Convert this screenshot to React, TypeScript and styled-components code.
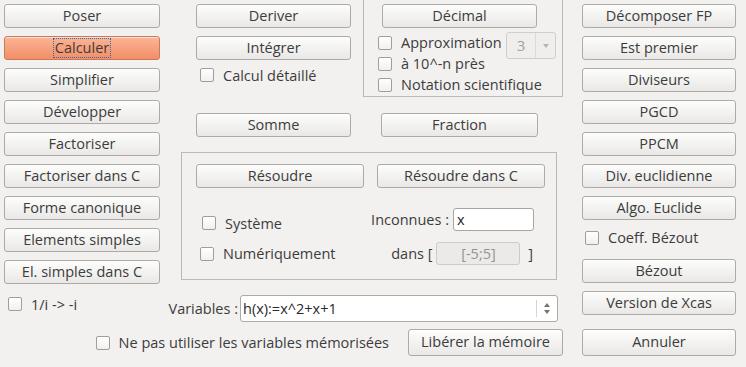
import React from 'react';
import styled, { createGlobalStyle } from 'styled-components';

const TEXT = '#3c3c3c';
const BORDER = '#aeaba7';
const FRAME = '#bcb9b5';

const GlobalStyle = createGlobalStyle`
  html, body {
    margin: 0;
    padding: 0;
    background: #f2f1f0;
  }
  body {
    font-family: 'Open Sans', 'Noto Sans', sans-serif;
    font-size: 14.5px;
    color: ${TEXT};
  }
  * {
    box-sizing: border-box;
  }
`;

const Window = styled.div`
  width: 746px;
  height: 367px;
  overflow: hidden;
  display: grid;
  grid-template-columns: 156px 422px 154px;
  grid-template-rows: 322px 27px;
  row-gap: 7px;
  padding-left: 4px;
`;

const Column = styled.div`
  display: flex;
  flex-direction: column;
  gap: 8px;
  padding-top: 4px;
`;

const Button = styled.button<{ $w?: number; $h?: number; $active?: boolean; $top?: number }>`
  width: ${(p) => p.$w ?? 156}px;
  height: ${(p) => p.$h ?? 24}px;
  margin-top: ${(p) => p.$top ?? 0}px;
  flex-shrink: 0;
  padding: 0;
  border-radius: 3px;
  border: 1px solid ${(p) => (p.$active ? '#c77a5b' : BORDER)};
  background: ${(p) =>
    p.$active
      ? 'linear-gradient(#fbb596, #f38d67)'
      : 'linear-gradient(#fdfdfc, #e9e8e6)'};
  box-shadow: inset 0 1px 0 rgba(255, 255, 255, 0.6);
  font-family: inherit;
  font-size: 14.5px;
  line-height: 1;
  color: ${TEXT};
  display: flex;
  align-items: center;
  justify-content: center;
`;

const Focus = styled.span`
  outline: 1px dotted #2d6aa6;
  outline-offset: 1px;
  padding: 1px 0;
`;

const CheckRow = styled.label<{ $left?: number; $h?: number; $top?: number }>`
  display: flex;
  align-items: center;
  gap: 9px;
  height: ${(p) => p.$h ?? 14}px;
  margin-top: ${(p) => p.$top ?? 0}px;
  padding-left: ${(p) => p.$left ?? 0}px;
  white-space: nowrap;
`;

const Box = styled.span`
  width: 14px;
  height: 14px;
  flex-shrink: 0;
  border: 1px solid #a19e9a;
  border-radius: 2px;
  background: linear-gradient(#ffffff, #f1f0ef);
`;

const Check: React.FC<{ label: string; left?: number; h?: number; top?: number }> = ({
  label,
  left,
  h,
  top,
}) => (
  <CheckRow $left={left} $h={h} $top={top}>
    <Box />
    <span>{label}</span>
  </CheckRow>
);

const Middle = styled.div`
  padding-left: 10px;
  display: flex;
  flex-direction: column;
`;

const TopRow = styled.div`
  display: flex;
  height: 97px;
`;

const SubStack = styled.div`
  display: flex;
  flex-direction: column;
  gap: 8px;
  padding: 4px 0 0 26px;
`;

const DecimalBox = styled.div`
  margin-left: 12px;
  width: 200px;
  height: 97px;
  border: 1px solid ${FRAME};
  border-top: none;
  padding: 4px 6px 0 14px;
  display: grid;
  grid-template-columns: minmax(0, 1fr) 50px;
  grid-template-rows: 28px 21px 21px 21px;
  align-items: center;

  & > button {
    grid-column: 1 / -1;
    margin-left: 4px;
    align-self: start;
  }
`;

const Spin = styled.div`
  grid-column: 2;
  grid-row: 2 / span 2;
  align-self: start;
  height: 27px;
  width: 50px;
  border: 1px solid #d0cecb;
  border-radius: 3px;
  background: #efeeed;
  color: #a3a19e;
  display: flex;
  align-items: center;
`;

const SpinValue = styled.span`
  flex: 1;
  padding-left: 10px;
`;

const SpinArrow = styled.span`
  width: 20px;
  height: 100%;
  border-left: 1px solid #dcdad7;
  display: flex;
  align-items: center;
  justify-content: center;
`;

const TriangleDown = styled.span<{ $color?: string }>`
  width: 0;
  height: 0;
  border-left: 3.5px solid transparent;
  border-right: 3.5px solid transparent;
  border-top: 4px solid ${(p) => p.$color ?? '#b7b5b2'};
`;

const TriangleUp = styled(TriangleDown)`
  border-top: none;
  border-bottom: 4px solid ${(p) => p.$color ?? '#b7b5b2'};
`;

const ButtonRow = styled.div<{ $top?: number; $left?: number; $gap?: number }>`
  display: flex;
  gap: ${(p) => p.$gap ?? 30}px;
  margin-top: ${(p) => p.$top ?? 0}px;
  padding-left: ${(p) => p.$left ?? 0}px;
`;

const SolveBox = styled.div`
  margin: 15px 0 0 11px;
  width: 376px;
  height: 128px;
  border: 1px solid ${FRAME};
  padding: 11px 0 0 14px;
`;

const SolveGrid = styled.div`
  display: grid;
  grid-template-columns: 168px 168px;
  grid-auto-rows: 23px;
  column-gap: 13px;
  row-gap: 11px;
  margin-top: 20px;

  & > label:first-child {
    align-self: end;
    margin-bottom: 1px;
  }
  & > label {
    align-self: center;
  }
`;

const FieldRow = styled.div<{ $right: number }>`
  display: flex;
  align-items: center;
  justify-content: flex-end;
  gap: 4px;
  padding-right: ${(p) => p.$right}px;
  white-space: nowrap;
`;

const TextInput = styled.div<{ $w: number; $disabled?: boolean }>`
  width: ${(p) => p.$w}px;
  flex-shrink: 0;
  height: 23px;
  border-radius: 3px;
  border: 1px solid ${(p) => (p.$disabled ? '#cdcbc8' : '#a9a6a2')};
  background: ${(p) => (p.$disabled ? '#ebeae8' : '#ffffff')};
  color: ${(p) => (p.$disabled ? '#94928f' : '#222')};
  display: flex;
  align-items: center;
  justify-content: ${(p) => (p.$disabled ? 'center' : 'flex-start')};
  padding-left: ${(p) => (p.$disabled ? 0 : 3)}px;
`;

const VarRow = styled.div`
  margin-top: 15px;
  width: 388px;
  height: 27px;
  display: flex;
  align-items: center;
  justify-content: flex-end;
  gap: 2px;
  white-space: nowrap;
`;

const Combo = styled.div`
  width: 318px;
  flex-shrink: 0;
  height: 27px;
  border: 1px solid ${BORDER};
  border-radius: 3px;
  background: #ffffff;
  display: flex;
  align-items: center;
  color: #2a2a2a;
`;

const ComboText = styled.span`
  flex: 1;
  padding-left: 2px;
`;

const ComboArrows = styled.span`
  width: 21px;
  height: 17px;
  border-left: 1px solid #d6d4d1;
  display: flex;
  flex-direction: column;
  align-items: center;
  justify-content: center;
  gap: 3px;
`;

const BottomBar = styled.div`
  grid-column: 1 / 3;
  display: flex;
  align-items: center;
  justify-content: flex-end;
  gap: 19px;
  padding-right: 19px;
`;

const App: React.FC = () => (
  <>
    <GlobalStyle />
    <Window>
      <Column>
        <Button>Poser</Button>
        <Button $active>
          <Focus>Calculer</Focus>
        </Button>
        <Button>Simplifier</Button>
        <Button>Développer</Button>
        <Button>Factoriser</Button>
        <Button>Factoriser dans C</Button>
        <Button>Forme canonique</Button>
        <Button>Elements simples</Button>
        <Button>El. simples dans C</Button>
        <Check label="1/i -> -i" left={4} h={24} />
      </Column>

      <Middle>
        <TopRow>
          <SubStack>
            <Button $w={155}>Deriver</Button>
            <Button $w={155}>Intégrer</Button>
            <Check label="Calcul détaillé" left={4} />
          </SubStack>
          <DecimalBox>
            <Button $w={155}>Décimal</Button>
            <Check label="Approximation" />
            <Spin>
              <SpinValue>3</SpinValue>
              <SpinArrow>
                <TriangleDown />
              </SpinArrow>
            </Spin>
            <Check label="à 10^-n près" />
            <Check label="Notation scientifique" />
          </DecimalBox>
        </TopRow>

        <ButtonRow $top={16} $left={26}>
          <Button $w={155}>Somme</Button>
          <Button $w={157}>Fraction</Button>
        </ButtonRow>

        <SolveBox>
          <ButtonRow $gap={13}>
            <Button $w={168}>Résoudre</Button>
            <Button $w={168}>Résoudre dans C</Button>
          </ButtonRow>
          <SolveGrid>
            <Check label="Système" left={6} />
            <FieldRow $right={11}>
              <span>Inconnues :</span>
              <TextInput $w={81}>x</TextInput>
            </FieldRow>
            <Check label="Numériquement" left={4} />
            <FieldRow $right={12}>
              <span>dans [</span>
              <TextInput $w={84} $disabled>
                [-5;5]
              </TextInput>
              <span>&nbsp;]</span>
            </FieldRow>
          </SolveGrid>
        </SolveBox>

        <VarRow>
          <span>Variables :</span>
          <Combo>
            <ComboText>h(x):=x^2+x+1</ComboText>
            <ComboArrows>
              <TriangleUp $color="#77746f" />
              <TriangleDown $color="#77746f" />
            </ComboArrows>
          </Combo>
        </VarRow>
      </Middle>

      <Column>
        <Button $w={154}>Décomposer FP</Button>
        <Button $w={154}>Est premier</Button>
        <Button $w={154}>Diviseurs</Button>
        <Button $w={154}>PGCD</Button>
        <Button $w={154}>PPCM</Button>
        <Button $w={154}>Div. euclidienne</Button>
        <Button $w={154}>Algo. Euclide</Button>
        <Check label="Coeff. Bézout" left={3} h={19} />
        <Button $w={154} $top={4}>
          Bézout
        </Button>
        <Button $w={154}>Version de Xcas</Button>
      </Column>

      <BottomBar>
        <Check label="Ne pas utiliser les variables mémorisées" />
        <Button $w={155} $h={27}>
          Libérer la mémoire
        </Button>
      </BottomBar>
      <Button $w={154} $h={27}>
        Annuler
      </Button>
    </Window>
  </>
);

export default App;
